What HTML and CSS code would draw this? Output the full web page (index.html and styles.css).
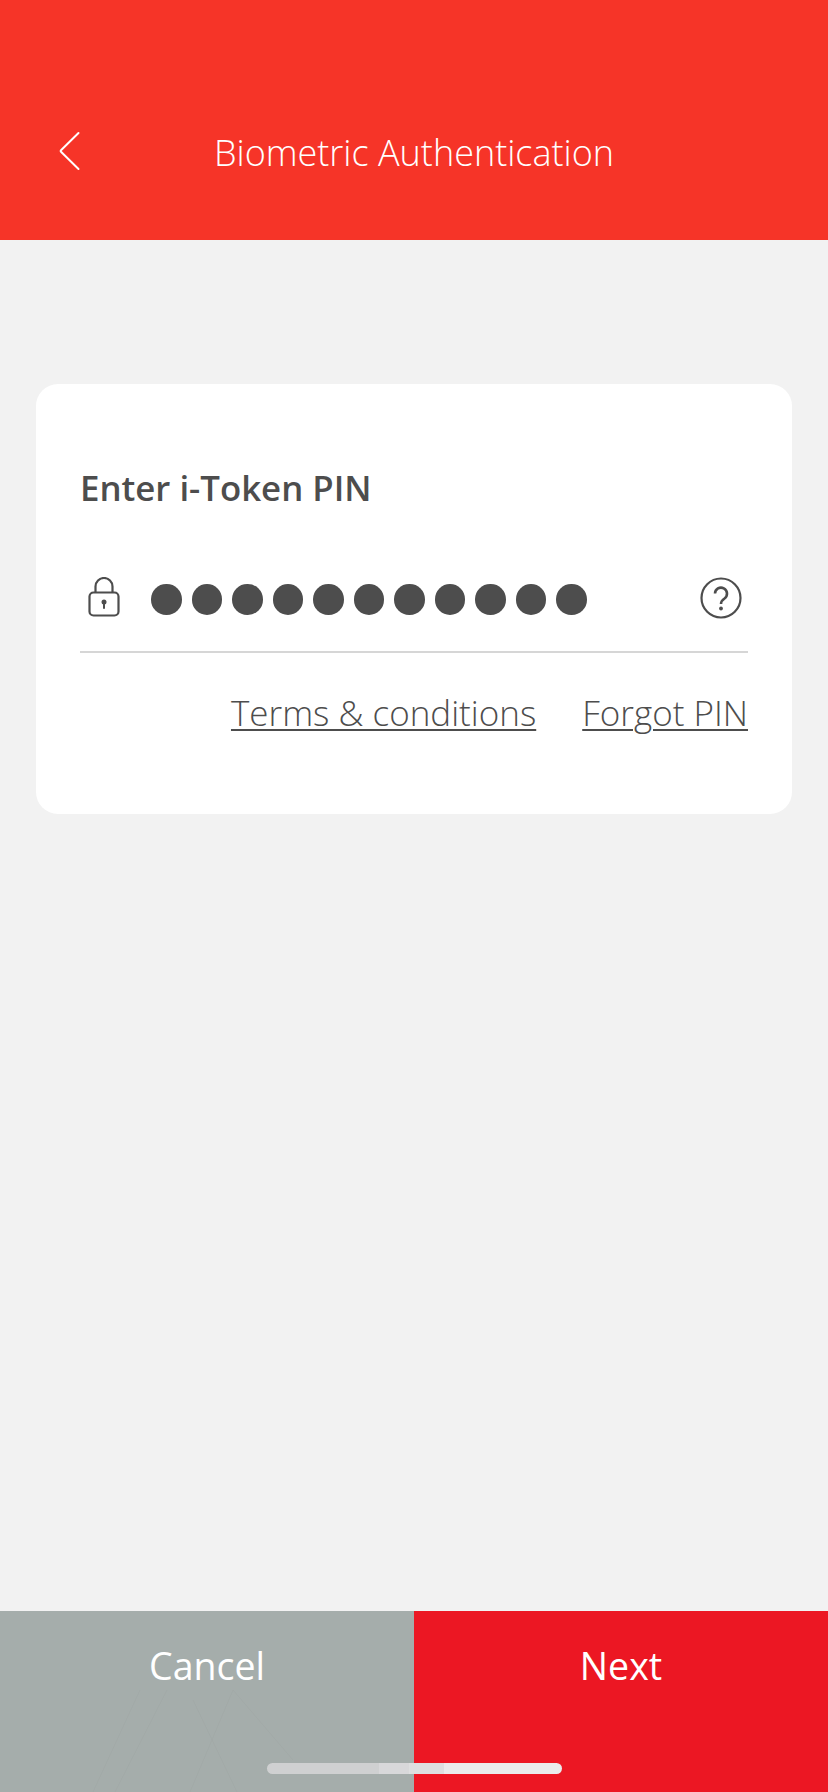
FILE: index.html
```html
<!DOCTYPE html>
<html lang="en">
<head>
<meta charset="utf-8">
<title>Biometric Authentication</title>
<link rel="stylesheet" href="styles.css">
</head>
<body>
<div class="screen">
  <header class="topbar">
    <svg class="back" width="24" height="40" viewBox="0 0 24 40"><path d="M21.500 2 4 19.200q-.8.800 0 1.600L21.500 38" fill="none" stroke="#fff" stroke-width="2" stroke-linecap="round"/></svg>
    <h1 class="title">Biometric Authentication</h1>
  </header>
  <main class="content">
    <section class="card">
      <h2 class="label">Enter i-Token PIN</h2>
      <div class="field">
        <svg class="lock" width="32" height="40" viewBox="0 0 32 40"><rect x="1.500" y="15.500" width="29" height="23" rx="4" fill="none" stroke="#4d4d4d" stroke-width="2.200"/><path d="M7.500 15.500V9.500a8.500 8.500 0 0 1 17 0v6" fill="none" stroke="#4d4d4d" stroke-width="2.200"/><circle cx="16" cy="25" r="2.500" fill="#4d4d4d"/><rect x="15" y="25" width="2" height="7" rx="1" fill="#4d4d4d"/></svg>
        <div class="dots"><span class="dot"></span><span class="dot"></span><span class="dot"></span><span class="dot"></span><span class="dot"></span><span class="dot"></span><span class="dot"></span><span class="dot"></span><span class="dot"></span><span class="dot"></span><span class="dot"></span></div>
        <svg class="help" width="42" height="42" viewBox="0 0 42 42"><circle cx="21" cy="21" r="19.500" fill="none" stroke="#4d4d4d" stroke-width="2.200"/><path d="M15 16.500a6 6 0 1 1 9.500 5c-2.500 1.700-3.500 2.800-3.500 5.500" fill="none" stroke="#4d4d4d" stroke-width="2.600"/><circle cx="21" cy="31.500" r="1.900" fill="#4d4d4d"/></svg>
      </div>
      <div class="links"><a class="link">Terms &amp; conditions</a><a class="link">Forgot PIN</a></div>
    </section>
  </main>
  <footer class="actions">
    <button class="btn cancel">Cancel</button>
    <button class="btn next">Next</button>
    <svg class="texture" width="414" height="181" viewBox="0 0 414 181"><path d="M233 79 190 181M233 79 293 149M140 79 93 181M167 79 115 181M193 89 237 181" fill="none" stroke="#000" stroke-opacity=".02" stroke-width="1"/></svg>
    <div class="home"></div>
  </footer>
</div>
</body>
</html>
```
FILE: styles.css
```css
* { box-sizing: border-box; }
html, body { margin: 0; padding: 0; }
body { font-family: "Open Sans", sans-serif; background: #f2f2f2; }
.screen { width: 828px; height: 1792px; display: flex; flex-direction: column; position: relative; overflow: hidden; }
.topbar { height: 240px; background: #f63428; position: relative; display: flex; justify-content: center; padding-top: 128px; }
.back { position: absolute; left: 57px; top: 131px; }
.title { margin: 0; font-size: 36px; line-height: 50px; font-weight: 300; color: #fff; }
.content { flex: 1; padding: 144px 36px 0; }
.card { height: 430px; background: #fff; border-radius: 22px; padding: 0 44px; }
.label { margin: 0; padding-top: 80px; font-size: 34.800px; line-height: 48px; font-weight: 600; color: #4d4d4d; }
.field { height: 141px; border-bottom: 2px solid #d6d6d6; display: flex; align-items: flex-start; padding: 65px 6px 0 8px; }
.lock { flex: none; }
.dots { display: flex; gap: 10px; margin-left: 31px; margin-top: 7px; flex: 1; }
.dot { width: 30.500px; height: 30.500px; border-radius: 50%; background: #4d4d4d; }
.help { flex: none; }
.links { display: flex; justify-content: flex-end; gap: 46px; margin-top: 36px; }
.link { font-size: 35px; line-height: 48px; font-weight: 300; color: #4d4d4d; text-decoration: underline; text-underline-offset: 3px; text-decoration-thickness: 2px; }
.actions { height: 181px; display: flex; position: relative; }
.btn { flex: 1; border: 0; padding: 0 0 72px; font-family: inherit; font-size: 37.500px; color: #fff; }
.cancel { background: #a5adab; }
.next { background: #ec1723; }
.texture { position: absolute; left: 0; top: 0; pointer-events: none; }
.home { position: absolute; left: 267px; top: 152px; width: 295px; height: 11px; border-radius: 5.500px; background: linear-gradient(90deg, #cfd0d1 0 38%, #d8d8da 38% 48%, #dedfe0 48% 60%, #ebebeb 60%); }
```
